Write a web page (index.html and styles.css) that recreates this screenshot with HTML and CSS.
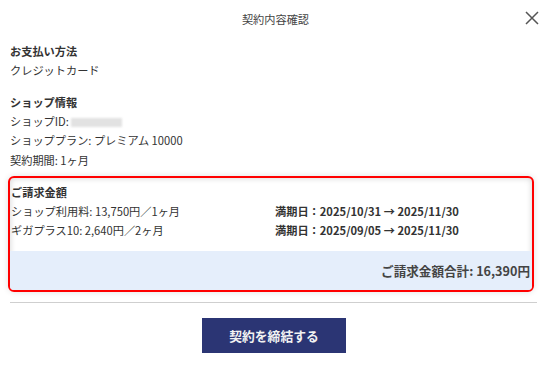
FILE: index.html
```html
<!DOCTYPE html>
<html lang="ja">
<head>
    <meta charset="UTF-8">
    <meta name="viewport" content="width=device-width, initial-scale=1.0">
    <title>契約内容確認</title>
    <link rel="stylesheet" href="styles.css">
</head>
<body>
    <div class="modal">
        <div class="modal-header">
            <div class="modal-title">契約内容確認</div>
            <button class="close-button" aria-label="閉じる">
                <svg width="14" height="14" viewBox="0 0 14 14">
                    <path d="M1 1 L13 13 M13 1 L1 13" stroke="#555" stroke-width="1.5" fill="none"/>
                </svg>
            </button>
        </div>

        <div class="section">
            <div class="section-title">お支払い方法</div>
            <div class="row">クレジットカード</div>
        </div>

        <div class="section">
            <div class="section-title">ショップ情報</div>
            <div class="row">ショップID: <span class="masked"></span></div>
            <div class="row">ショッププラン: プレミアム 10000</div>
            <div class="row">契約期間: 1ヶ月</div>
        </div>

        <div class="billing">
            <div class="billing-body">
                <div class="section-title">ご請求金額</div>
                <div class="billing-row">
                    <span class="billing-item">ショップ利用料: 13,750円／1ヶ月</span>
                    <span class="billing-date">満期日：2025/10/31 → 2025/11/30</span>
                </div>
                <div class="billing-row">
                    <span class="billing-item">ギガプラス10: 2,640円／2ヶ月</span>
                    <span class="billing-date">満期日：2025/09/05 → 2025/11/30</span>
                </div>
            </div>
            <div class="billing-total">ご請求金額合計: 16,390円</div>
        </div>

        <div class="divider"></div>

        <div class="actions">
            <button class="submit-button">契約を締結する</button>
        </div>
    </div>
</body>
</html>
```

FILE: styles.css
```css
body {
    margin: 0;
    background: #fff;
    font-family: "Noto Sans CJK JP", "Noto Sans", sans-serif;
    font-size: 11.2px;
    color: #333;
}
.modal {
    width: 551px;
    height: 366px;
    box-sizing: border-box;
    padding: 0 10px;
}
.modal-header {
    position: relative;
    height: 38px;
    display: flex;
    justify-content: center;
    align-items: center;
}
.modal-title {
    font-size: 11.2px;
    color: #444;
}
.close-button {
    position: absolute;
    right: 2px;
    top: 11px;
    padding: 0;
    border: none;
    background: none;
    cursor: pointer;
    display: flex;
}
.section {
    margin-top: 3px;
    margin-bottom: 11px;
}
.section-title {
    font-weight: bold;
    line-height: 20px;
    color: #333;
}
.row {
    line-height: 19.5px;
}
.masked {
    display: inline-block;
    width: 51px;
    height: 9px;
    vertical-align: -1px;
    background: #e2e2e2;
    filter: blur(1px);
}
.billing {
    margin: -5px 7px 0 -2px;
    border: 2px solid #f00;
    border-radius: 6px;
    box-shadow: inset 0 0 6px rgba(0, 0, 0, 0.18), 0 0 6px rgba(0, 0, 0, 0.12);
    overflow: hidden;
}
.billing-body {
    padding: 4px 0 11px 1px;
}
.billing-row {
    display: flex;
    line-height: 19px;
}
.billing-item {
    width: 264px;
}
.billing-date {
    font-weight: bold;
}
.billing-total {
    background: #e5eefb;
    height: 39px;
    line-height: 39px;
    text-align: right;
    padding-right: 2px;
    font-size: 12.6px;
    font-weight: bold;
    color: #444;
}
.divider {
    height: 1px;
    background: #cfcfcf;
    margin: 10px 4px 0 0;
}
.actions {
    display: flex;
    justify-content: center;
    margin-top: 15px;
    padding-right: 3px;
}
.submit-button {
    width: 144px;
    height: 35px;
    border: none;
    background: #2b3574;
    color: #f2f2f2;
    font-family: "Noto Sans CJK JP", "Noto Sans", sans-serif;
    font-size: 12.8px;
    font-weight: bold;
    cursor: pointer;
}
```
